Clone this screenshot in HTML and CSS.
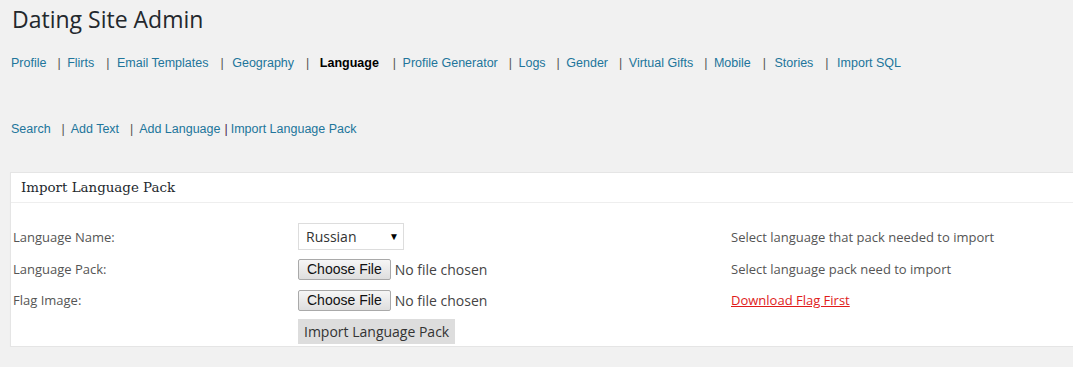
FILE: index.html
```html
<!DOCTYPE html>
<html lang="en">
<head>
    <meta charset="UTF-8">
    <meta name="viewport" content="width=device-width, initial-scale=1.0">
    <title>Dating Site Admin</title>
    <link rel="stylesheet" href="styles.css">
</head>
<body>
    <div class="wrap">
        <h1>Dating Site Admin</h1>

        <div class="main-nav">
            <a href="#">Profile</a><span class="sep">|</span>
            <a href="#">Flirts</a><span class="sep sep-mid">|</span>
            <a href="#">Email Templates</a><span class="sep sep-wide">|</span>
            <a href="#">Geography</a><span class="sep sep-before">|</span>
            <span class="current">Language</span><span class="sep sep-after">|</span>
            <a href="#">Profile Generator</a><span class="sep">|</span>
            <a href="#">Logs</a><span class="sep">|</span>
            <a href="#">Gender</a><span class="sep">|</span>
            <a href="#">Virtual Gifts</a><span class="sep">|</span>
            <a href="#">Mobile</a><span class="sep sep-wide">|</span>
            <a href="#">Stories</a><span class="sep sep-wide">|</span>
            <a href="#">Import SQL</a>
        </div>

        <div class="sub-nav">
            <a href="#">Search</a><span class="sep">|</span>
            <a href="#">Add Text</a><span class="sep">|</span>
            <a href="#">Add Language</a><span class="sep-tight">|</span><a href="#">Import Language Pack</a>
        </div>

        <div class="postbox">
            <h3 class="postbox-title">Import Language Pack</h3>
            <form class="import-form">
                <label class="field-label" for="lang">Language Name:</label>
                <div class="field">
                    <div class="select-wrap">
                        <select id="lang">
                            <option>Russian</option>
                            <option>English</option>
                            <option>German</option>
                        </select>
                        <span class="select-arrow">&#9660;</span>
                    </div>
                </div>
                <div class="hint">Select language that pack needed to import</div>

                <label class="field-label" for="pack">Language Pack:</label>
                <div class="field"><input type="file" id="pack"></div>
                <div class="hint">Select language pack need to import</div>

                <label class="field-label" for="flag">Flag Image:</label>
                <div class="field"><input type="file" id="flag"></div>
                <div class="hint"><a class="flag-link" href="#">Download Flag First</a></div>

                <div></div>
                <div class="field"><button type="submit" class="import-button">Import Language Pack</button></div>
                <div></div>
            </form>
        </div>
    </div>
</body>
</html>
```

FILE: styles.css
```css
html {
    overflow: hidden;
}

body {
    margin: 0;
    background-color: #f1f1f1;
    font-family: "Open Sans", sans-serif;
    color: #444;
}

.wrap {
    padding-left: 10px;
}

h1 {
    margin: 3px 0 0 2px;
    font-size: 23px;
    line-height: 32px;
    font-weight: 400;
    color: #23282d;
}

.main-nav, .sub-nav {
    font-family: "Liberation Sans", Arial, sans-serif;
    font-size: 12.5px;
    line-height: 20px;
    padding-left: 1px;
    color: #555;
}

.main-nav {
    margin-top: 18px;
}

.sub-nav {
    margin-top: 46px;
}

.main-nav a, .sub-nav a {
    color: #21759b;
    text-decoration: none;
}

.current {
    font-weight: bold;
    color: #000;
}

.sep {
    margin: 0 3px 0 11px;
    color: #555;
}

.sep-mid {
    margin: 0 4px 0 12px;
}

.sep-wide {
    margin: 0 5px 0 12px;
}

.sep-before {
    margin: 0 7px 0 12px;
}

.sep-after {
    margin: 0 3px 0 14px;
}

.sep-tight {
    margin: 0 3px 0 4px;
    color: #4b2a52;
}

.postbox {
    margin-top: 33px;
    margin-right: -30px;
    background: #fff;
    border: 1px solid #e5e5e5;
    box-shadow: 0 1px 1px rgba(0, 0, 0, 0.04);
}

.postbox-title {
    margin: 0;
    height: 29px;
    padding-left: 10px;
    border-bottom: 1px solid #eee;
    font-family: "DejaVu Serif", Georgia, serif;
    font-size: 13.4px;
    font-weight: 400;
    line-height: 29px;
    color: #23282d;
}

.import-form {
    display: grid;
    grid-template-columns: 285px 433px 1fr;
    grid-template-rows: 27px 24px 24px 25px;
    row-gap: 7px;
    align-items: center;
    padding: 20px 0 2px 2px;
    font-size: 13px;
}

.field-label {
    color: #555;
}

.hint {
    color: #555;
}

.field {
    display: flex;
    align-items: center;
}

.select-wrap {
    position: relative;
}

.select-wrap select {
    appearance: none;
    width: 106px;
    height: 27px;
    margin: 0;
    padding: 0 0 0 7px;
    border: 1px solid #ddd;
    background: #fff;
    font-family: "Open Sans", sans-serif;
    font-size: 14px;
    color: #333;
}

.select-arrow {
    position: absolute;
    right: 5px;
    top: 6px;
    font-size: 10px;
    color: #000;
    pointer-events: none;
}

input[type="file"] {
    font-family: "Open Sans", sans-serif;
    font-size: 14px;
    color: #444;
}

input[type="file"]::file-selector-button {
    height: 21px;
    margin: 0 4px 0 0;
    padding: 0 8px;
    border: 1px solid #a9a9a9;
    border-radius: 2px;
    background: linear-gradient(#f6f6f6, #dedede);
    font-family: "Liberation Sans", Arial, sans-serif;
    font-size: 14px;
    color: #111;
}

.import-button {
    height: 25px;
    padding: 0 6px;
    border: none;
    background-color: #ddd;
    font-family: "Open Sans", sans-serif;
    font-size: 14px;
    color: #333;
}

.flag-link {
    color: #e01b1b;
}
```
